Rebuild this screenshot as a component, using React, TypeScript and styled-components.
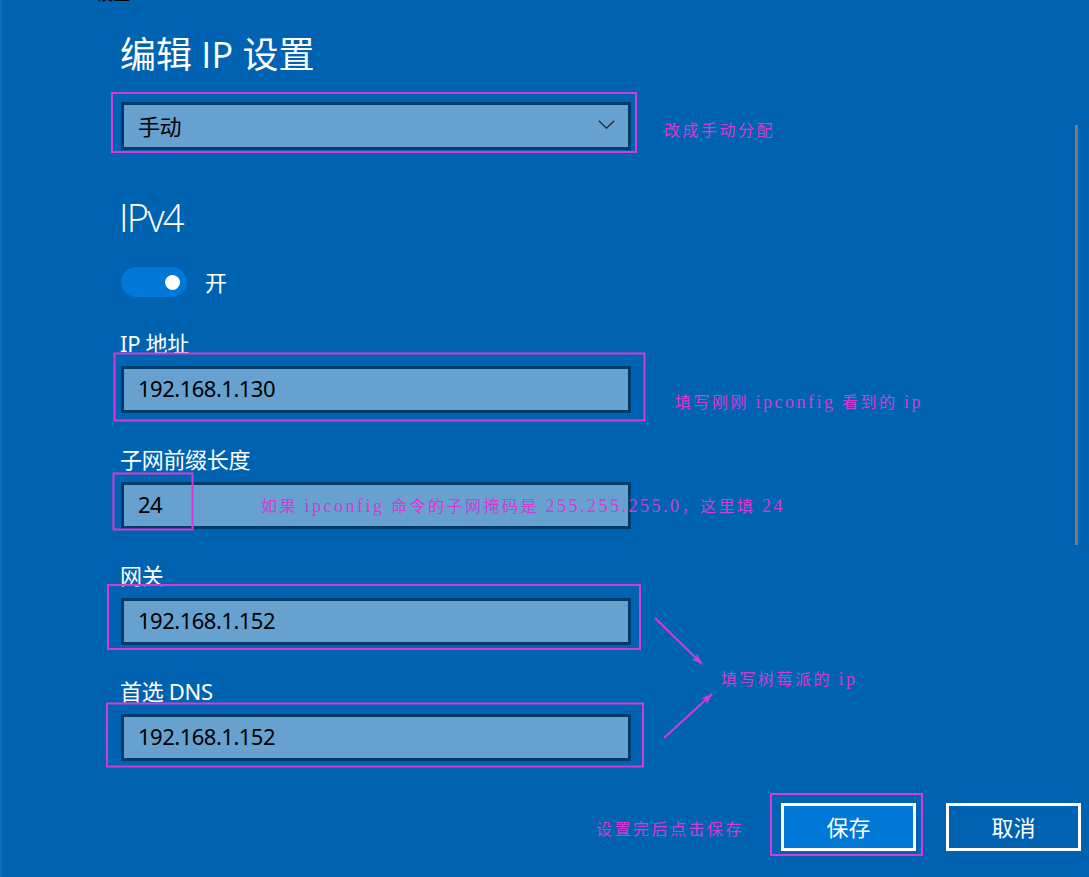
import React from "react";
import styled, { createGlobalStyle } from "styled-components";

const Global = createGlobalStyle`
  html, body { margin: 0; padding: 0; background: #0063b1; }
  body { width: 1089px; height: 877px; overflow: hidden; }
  #root { width: 1089px; height: 877px; }
`;

const UI_FONT = `"Noto Sans", "Noto Sans CJK SC", sans-serif`;
const HEAD_FONT = `"Open Sans", "Noto Sans CJK SC", sans-serif`;
const MAGENTA = "#d43ad4";

const Page = styled.div`
  position: relative;
  width: 1089px;
  height: 877px;
  background: #0063b1;
  box-shadow: inset 2px 0 0 #0b6dbc;
  display: flex;
  flex-direction: column;
  font-family: ${UI_FONT};
  overflow: hidden;
`;

const TopBar = styled.div`
  height: 3px;
  overflow: hidden;
  display: flex;
  align-items: flex-end;
  padding-left: 32px;
  gap: 50px;
  color: #000;
`;

const TopText = styled.span`
  font-family: "DejaVu Sans", "Noto Sans CJK SC", sans-serif;
  font-size: 17px;
  line-height: 17px;
`;

const Content = styled.div`
  display: flex;
  flex-direction: column;
  padding-left: 121px;
  width: 510px;
`;

const Title = styled.h1`
  margin: 34px 0 0 -1px;
  font-family: ${HEAD_FONT};
  font-size: 36px;
  line-height: 36px;
  font-weight: 400;
  color: #fff;
`;

const Box = styled.div`
  box-sizing: border-box;
  width: 510px;
  height: 48px;
  border: 3px solid #003b6a;
  background: #66a1d0;
  display: flex;
  align-items: center;
  justify-content: space-between;
  padding: 0 13px 3px 14px;
  color: #000;
  font-size: 22px;
  letter-spacing: -0.5px;
`;

const SelectBox = styled(Box)`
  margin-top: 29px;
`;

const InputBox = styled(Box)`
  margin-top: 12px;
  height: 47px;
`;

const SectionTitle = styled.h2`
  margin: 48px 0 0 -2px;
  font-family: ${HEAD_FONT};
  font-size: 38px;
  line-height: 38px;
  font-weight: 300;
  letter-spacing: -1.8px;
  color: #fff;
`;

const ToggleRow = styled.div`
  margin-top: 31px;
  display: flex;
  align-items: center;
  gap: 18px;
  color: #fff;
  font-size: 22px;
  line-height: 22px;
`;

const Track = styled.div`
  box-sizing: border-box;
  width: 66px;
  height: 30px;
  border-radius: 15px;
  background: #0078d7;
  display: flex;
  align-items: center;
  justify-content: flex-end;
  padding-right: 7px;
`;

const Knob = styled.div`
  width: 15px;
  height: 15px;
  border-radius: 50%;
  background: #fff;
`;

const Label = styled.div`
  margin: 35px 0 0 -1px;
  color: #fff;
  font-size: 22px;
  line-height: 22px;
  letter-spacing: -0.3px;
`;

const Footer = styled.div`
  margin-top: auto;
  display: flex;
  justify-content: flex-end;
  gap: 30px;
  padding: 0 8px 26px 0;
`;

const Button = styled.button<{ $primary?: boolean }>`
  box-sizing: border-box;
  width: 135px;
  height: 48px;
  border: 3px solid #fff;
  background: ${(p) => (p.$primary ? "#0078d7" : "transparent")};
  color: #fff;
  font-family: ${UI_FONT};
  font-size: 22px;
  padding: 0 0 2px;
`;

const ScrollThumb = styled.div`
  position: absolute;
  right: 11px;
  top: 125px;
  width: 3px;
  height: 420px;
  background: #7b7b7b;
`;

const Overlay = styled.div`
  position: absolute;
  inset: 0;
  pointer-events: none;
`;

const Note = styled.div<{ $x: number; $y: number }>`
  position: absolute;
  left: ${(p) => p.$x}px;
  top: ${(p) => p.$y}px;
  font-family: "Liberation Serif", "Noto Sans CJK SC", serif;
  font-size: 16px;
  line-height: 20px;
  letter-spacing: 2.5px;
  color: ${MAGENTA};
  white-space: nowrap;
`;

const Lat = styled.span`
  font-size: 18px;
`;

const Chevron = () => (
  <svg width="17" height="9" viewBox="0 0 17 9">
    <polyline
      points="0.8,0.8 8.5,8.2 16.2,0.8"
      fill="none"
      stroke="#1d2c3c"
      strokeWidth="1.3"
    />
  </svg>
);

const Marks = () => (
  <svg width="1089" height="877" viewBox="0 0 1089 877" style={{ position: "absolute", left: 0, top: 0 }}>
    <defs>
      <marker id="ah" markerWidth="12" markerHeight="8" refX="11" refY="4" orient="auto" markerUnits="userSpaceOnUse">
        <path d="M0,0 L12,4 L0,8 L3,4 Z" fill={MAGENTA} />
      </marker>
    </defs>
    <g fill="none" stroke={MAGENTA} strokeWidth="2">
      <rect x="112" y="93" width="524" height="59" />
      <rect x="114.5" y="353.5" width="530" height="67" />
      <rect x="113.5" y="473.5" width="79" height="56" />
      <rect x="108" y="585" width="532" height="64" />
      <rect x="107" y="703.5" width="536" height="63" />
      <rect x="771" y="794" width="151" height="61" />
      <line x1="655" y1="618" x2="702" y2="664" markerEnd="url(#ah)" />
      <line x1="664" y1="738" x2="712" y2="694" markerEnd="url(#ah)" />
    </g>
  </svg>
);

const fields: { label: string; value: string }[] = [
  { label: "IP 地址", value: "192.168.1.130" },
  { label: "子网前缀长度", value: "24" },
  { label: "网关", value: "192.168.1.152" },
  { label: "首选 DNS", value: "192.168.1.152" },
];

export default function App() {
  return (
    <>
      <Global />
      <Page>
        <TopBar>
          <TopText>←</TopText>
          <TopText>设置</TopText>
        </TopBar>
        <Content>
          <Title>编辑 IP 设置</Title>
          <SelectBox>
            <span>手动</span>
            <Chevron />
          </SelectBox>
          <SectionTitle>IPv4</SectionTitle>
          <ToggleRow>
            <Track>
              <Knob />
            </Track>
            <span>开</span>
          </ToggleRow>
          {fields.map((f) => (
            <React.Fragment key={f.label}>
              <Label>{f.label}</Label>
              <InputBox>{f.value}</InputBox>
            </React.Fragment>
          ))}
        </Content>
        <Footer>
          <Button $primary>保存</Button>
          <Button>取消</Button>
        </Footer>
        <ScrollThumb />
        <Overlay>
          <Marks />
          <Note $x={664} $y={121}>改成手动分配</Note>
          <Note $x={675} $y={392}>
            填写刚刚 <Lat>ipconfig</Lat> 看到的 <Lat>ip</Lat>
          </Note>
          <Note $x={261} $y={496}>
            如果 <Lat>ipconfig</Lat> 命令的子网掩码是 <Lat>255.255.255.0</Lat>，这里填 <Lat>24</Lat>
          </Note>
          <Note $x={721} $y={669}>
            填写树莓派的 <Lat>ip</Lat>
          </Note>
          <Note $x={596} $y={820}>设置完后点击保存</Note>
        </Overlay>
      </Page>
    </>
  );
}
